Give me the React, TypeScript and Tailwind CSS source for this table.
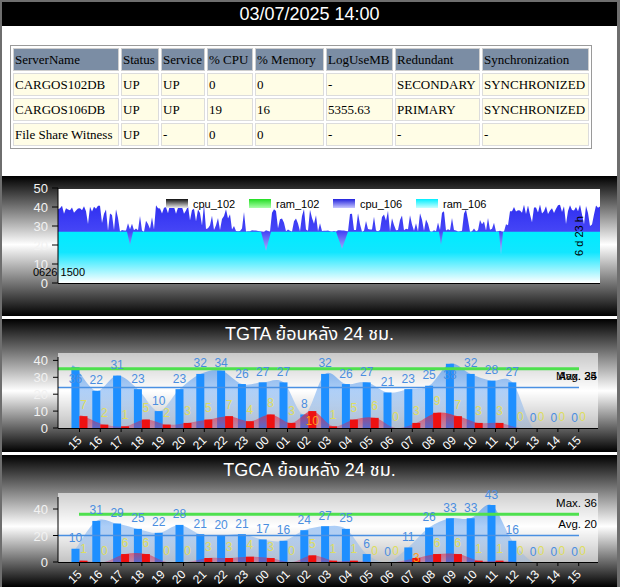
import React from 'react'

type Pt = [number, number]

const hours = ['15', '16', '17', '18', '19', '20', '21', '22', '23', '00', '01', '02', '03', '04', '05', '06', '07', '08', '09', '10', '11', '12', '13', '14', '15']
const cx = (i: number) => 79.5 + 20.8 * i

function rng(seed: number) {
  let a = seed
  return () => {
    a |= 0
    a = (a + 0x6d2b79f5) | 0
    let t = Math.imul(a ^ (a >>> 15), 1 | a)
    t = (t + Math.imul(t ^ (t >>> 7), 61 | t)) ^ t
    return ((t ^ (t >>> 14)) >>> 0) / 4294967296
  }
}

function spline(pts: Pt[]) {
  let d = `M${pts[0][0]},${pts[0][1]}`
  for (let i = 0; i < pts.length - 1; i++) {
    const p0 = pts[i - 1] ?? pts[i]
    const p1 = pts[i]
    const p2 = pts[i + 1]
    const p3 = pts[i + 2] ?? p2
    const t = 1 / 6
    d += ` C${p1[0] + (p2[0] - p0[0]) * t},${p1[1] + (p2[1] - p0[1]) * t} ${p2[0] - (p3[0] - p1[0]) * t},${p2[1] - (p3[1] - p1[1]) * t} ${p2[0]},${p2[1]}`
  }
  return d
}

const headers = ['ServerName', 'Status', 'Service', '% CPU', '% Memory', 'LogUseMB', 'Redundant', 'Synchronization']
const colW = ['w-[106px]', 'w-[38px]', 'w-[44px]', 'w-[46px]', 'w-[69px]', 'w-[67px]', 'w-[85px]', 'w-[107px]']
const rows = [
  ['CARGOS102DB', 'UP', 'UP', '0', '0', '-', 'SECONDARY', 'SYNCHRONIZED'],
  ['CARGOS106DB', 'UP', 'UP', '19', '16', '5355.63', 'PRIMARY', 'SYNCHRONIZED'],
  ['File Share Witness', 'UP', '-', '0', '0', '-', '-', '-'],
]

function StatusTable() {
  return (
    <table className="table-fixed w-[582px] border-separate border-spacing-[2px] border border-[#9a9a9a] bg-white font-['Liberation_Serif',serif] text-[13px] text-black">
      <thead>
        <tr>
          {headers.map((h, i) => (
            <th key={h} className={`${colW[i]} h-[23px] px-[1px] py-0 border border-[#cfcfcf] bg-[#7b8da4] text-left font-normal whitespace-nowrap`}>
              {h}
            </th>
          ))}
        </tr>
      </thead>
      <tbody>
        {rows.map(r => (
          <tr key={r[0]}>
            {r.map((v, i) => (
              <td key={i} className="h-[23px] px-[1px] py-0 border border-[#dcdcdc] bg-[#fffde6] whitespace-nowrap">
                {v}
              </td>
            ))}
          </tr>
        ))}
      </tbody>
    </table>
  )
}

// cpu / ram trend over the last week
const zones: [number, number, 'd' | 'm' | 'l'][] = [
  [58, 108, 'd'], [108, 155, 'm'], [155, 205, 'd'], [205, 245, 'm'], [245, 272, 'l'],
  [272, 322, 'm'], [322, 350, 'l'], [350, 425, 'm'], [425, 440, 'l'], [440, 495, 'm'],
  [495, 505, 'l'], [505, 601, 'd'],
]
const dips: [number, number, number][] = [[130, 3, 7], [266, 5, 10], [342, 6, 9], [441, 2, 7], [501, 2, 12]]
const uy = (v: number) => 283 - v * 1.9

function usageData() {
  const rnd = rng(11)
  const cpu: Pt[] = []
  for (let x = 58; x <= 600; x += 2) {
    const z = zones.find(s => x >= s[0] && x < s[1])?.[2] ?? 'd'
    const r = rnd()
    const r2 = rnd()
    let v: number
    if (z === 'd') v = r2 < 0.1 ? 30 + r * 4 : 36 + r * 5.5
    else if (z === 'm') v = r2 < 0.5 ? 30 + r * 9 : 27 + r * 2
    else v = r2 < 0.08 ? 31 + r * 5 : 27 + r * 0.8
    cpu.push([x, uy(v)])
  }
  const ram: Pt[] = []
  for (let x = 58; x <= 600; x += 1) {
    let v = 27
    dips.forEach(([c, w, d]) => {
      const dx = Math.abs(x - c)
      if (dx < w) v = Math.min(v, 27 - d * (1 - dx / w))
    })
    ram.push([x, uy(v)])
  }
  return { cpu, ram }
}

function UsageChart() {
  const { cpu, ram } = usageData()
  const area = (pts: Pt[]) => `M58,283 ${pts.map(p => `L${p[0]},${p[1]}`).join(' ')} L600,283 Z`
  const legend = [
    { x: 166, label: 'cpu_102', fill: 'url(#lg102c)' },
    { x: 249, label: 'ram_102', fill: 'url(#lg102r)' },
    { x: 333, label: 'cpu_106', fill: 'url(#lg106c)' },
    { x: 416, label: 'ram_106', fill: 'url(#lg106r)' },
  ]
  return (
    <div className="h-[140px] bg-[linear-gradient(180deg,#000_0%,#fff_49%,#000_100%)]">
      <svg width="615" height="140" className="block font-['Liberation_Sans',Arial,sans-serif]">
        <defs>
          <linearGradient id="cpuFill" gradientUnits="userSpaceOnUse" x1="0" y1="190" x2="0" y2="283">
            <stop offset="0" stopColor="#2323ee" />
            <stop offset="0.45" stopColor="#4646f6" />
            <stop offset="0.7" stopColor="#c4c8ff" />
            <stop offset="1" stopColor="#ffffff" />
          </linearGradient>
          <linearGradient id="ramFill" gradientUnits="userSpaceOnUse" x1="0" y1="232" x2="0" y2="283">
            <stop offset="0" stopColor="#00ecff" />
            <stop offset="0.4" stopColor="#12e6ff" />
            <stop offset="1" stopColor="#ffffff" />
          </linearGradient>
          <linearGradient id="lg102c" x1="0" y1="0" x2="0" y2="1">
            <stop offset="0" stopColor="#111" />
            <stop offset="1" stopColor="#eee" />
          </linearGradient>
          <linearGradient id="lg102r" x1="0" y1="0" x2="0" y2="1">
            <stop offset="0" stopColor="#22dd22" />
            <stop offset="1" stopColor="#aaffaa" />
          </linearGradient>
          <linearGradient id="lg106c" x1="0" y1="0" x2="0" y2="1">
            <stop offset="0" stopColor="#2222dd" />
            <stop offset="1" stopColor="#c8c8ff" />
          </linearGradient>
          <linearGradient id="lg106r" x1="0" y1="0" x2="0" y2="1">
            <stop offset="0" stopColor="#00eeff" />
            <stop offset="1" stopColor="#c8ffff" />
          </linearGradient>
        </defs>
        <g transform="translate(-2,-176)">
          <rect x="58" y="189" width="542" height="94" fill="#fff" />
          <path d={area(cpu)} fill="url(#cpuFill)" />
          <path d={area(ram)} fill="url(#ramFill)" />
          <line x1="58" y1="188" x2="58" y2="283" stroke="#000" />
          <line x1="58" y1="283.5" x2="600" y2="283.5" stroke="#000" />
          {[0, 10, 20, 30, 40, 50].map(v => (
            <g key={v}>
              <line x1="52" x2="58" y1={uy(v)} y2={uy(v)} stroke="#000" />
              <text x="48" y={uy(v) + 5} textAnchor="end" fontSize="13" fill="#f2f2f2">{v}</text>
            </g>
          ))}
          {legend.map(l => (
            <g key={l.label}>
              <rect x={l.x} y="199" width="22" height="9" fill={l.fill} />
              <text x={l.x + 27} y="208" fontSize="11" fill="#000">{l.label}</text>
            </g>
          ))}
          <text x="33" y="276" fontSize="11" fill="#000">0626 1500</text>
          <text transform="translate(583,236) rotate(-90)" textAnchor="middle" fontSize="11" fill="#000">6 d 23 h</text>
        </g>
      </svg>
    </div>
  )
}

interface HourProps {
  id: string
  title: string
  top: number
  height: number
  y0: number
  k: number
  axisTop: number
  ticks: number[]
  blue: number[]
  red: number[]
  max: number
  avg: number
  maxFrom: number
  maxTextY: number
  avgTextY: number
  labelMin: number
  insideRed: number[]
}

function HourChart(p: HourProps) {
  const y = (v: number) => p.y0 - v * p.k
  const svgTop = p.top + 28
  const bluePts: Pt[] = p.blue.map((v, i) => [cx(i) - 4, y(v)])
  const redPts: Pt[] = p.red.map((v, i) => [cx(i) + 4, y(v)])
  const bluePath = `${spline([[cx(0) - 8, y(p.blue[0])], ...bluePts])} L${cx(24) + 8},${p.y0} L${cx(0) - 8},${p.y0} Z`
  const redPath = `${spline([[cx(0), y(p.red[0])], ...redPts])} L${cx(24) + 8},${p.y0} L${cx(0)},${p.y0} Z`
  const blueLabelY = (v: number) => {
    const t = y(v)
    if (t - 11 < p.labelMin - 5) return t + 11
    return Math.max(t - 11, p.labelMin)
  }
  return (
    <div className="h-[var(--h)] flex flex-col bg-[linear-gradient(180deg,#000_0%,#fff_54%,#000_100%)]" style={{ ['--h' as string]: `${p.height}px` }}>
      <div className="h-[28px] shrink-0 pt-[5px] text-center text-white text-[18px] leading-[21px] font-['Liberation_Sans','Noto_Sans_Thai','Tahoma',sans-serif]">
        {p.title}
      </div>
      <svg width="615" height={p.height - 28} className="block font-['Liberation_Sans',Arial,sans-serif]">
        <defs>
          <linearGradient id={`${p.id}b`} gradientUnits="userSpaceOnUse" x1="0" y1={p.axisTop} x2="0" y2={p.y0}>
            <stop offset="0" stopColor="#4d97f0" stopOpacity="0.75" />
            <stop offset="1" stopColor="#7aaef0" stopOpacity="0.25" />
          </linearGradient>
          <linearGradient id={`${p.id}r`} gradientUnits="userSpaceOnUse" x1="0" y1={y(10)} x2="0" y2={p.y0}>
            <stop offset="0" stopColor="#ff1a1a" stopOpacity="0.7" />
            <stop offset="1" stopColor="#cc2266" stopOpacity="0.35" />
          </linearGradient>
          <clipPath id={`${p.id}c`}>
            <rect x="58" y={p.axisTop - 6} width="540" height={p.y0 - p.axisTop + 6} />
          </clipPath>
        </defs>
        <g transform={`translate(-2,${-svgTop})`}>
          <rect x="58" y={p.axisTop - 4} width="540" height={p.y0 - p.axisTop + 4} fill="#fff" fillOpacity="0.6" />
          <g clipPath={`url(#${p.id}c)`}>
            <path d={bluePath} fill={`url(#${p.id}b)`} />
            {p.blue.map((v, i) => v > 0 && (
              <rect key={i} x={cx(i) - 8} y={y(v)} width="8" height={v * p.k} fill="#1e8fff" />
            ))}
            <path d={redPath} fill={`url(#${p.id}r)`} />
            {p.red.map((v, i) => v > 0 && (
              <rect key={i} x={cx(i)} y={y(v)} width="8" height={v * p.k} fill="#ee1111" />
            ))}
          </g>
          <line x1={p.maxFrom} x2="579" y1={y(p.max)} y2={y(p.max)} stroke="#4ee04e" strokeWidth="3" />
          <line x1="58" x2="579" y1={y(p.avg)} y2={y(p.avg)} stroke="#4a90e2" strokeWidth="1.5" />
          <line x1="58" x2="58" y1={p.axisTop} y2={p.y0} stroke="#000" />
          <line x1="58" x2="598" y1={p.y0 + 0.5} y2={p.y0 + 0.5} stroke="#000" />
          {p.ticks.map(v => (
            <g key={v}>
              <line x1="53" x2="58" y1={y(v)} y2={y(v)} stroke="#000" />
              <text x="48" y={y(v) + 5} textAnchor="end" fontSize="13" fill="#f2f2f2">{v}</text>
            </g>
          ))}
          {hours.map((h, i) => (
            <g key={i}>
              <line x1={cx(i)} x2={cx(i)} y1={p.y0} y2={p.y0 + 4} stroke="#000" />
              <text transform={`translate(${cx(i) + 3},${p.y0 + 13}) rotate(-45)`} textAnchor="end" fontSize="12" fill="#fff">{h}</text>
            </g>
          ))}
          {p.blue.map((v, i) => (
            <text key={i} x={cx(i) - 4} y={blueLabelY(v) + 4.5} textAnchor="middle" fontSize="12" fill="#4a8ee0">{v}</text>
          ))}
          {p.red.map((v, i) => {
            const inside = p.insideRed.includes(i)
            const cy = inside ? Math.min(y(v) + 9, p.y0 - 5) : y(v) - 12
            return (
              <text key={i} x={cx(i) + 4} y={cy + 4.5} textAnchor="middle" fontSize="12" fill={inside ? '#ff9a1a' : '#dede5e'}>{v}</text>
            )
          })}
          <text x="597" y={p.maxTextY} textAnchor="end" fontSize="11.5" fill="#000">Max. {p.max}</text>
          <text x="597" y={p.avgTextY} textAnchor="end" fontSize="11.5" fill="#000">Avg. {p.avg}</text>
        </g>
      </svg>
    </div>
  )
}

export default function App() {
  return (
    <div className="w-[620px] h-[587px] overflow-hidden bg-white border-l-2 border-t-2 border-r-[3px] border-[#6e6e6e] font-['Liberation_Sans',Arial,sans-serif]">
      <div className="h-[24px] bg-black text-white text-[18px] leading-[24px] text-center">03/07/2025 14:00</div>
      <div className="h-[150px] pt-[19px] pl-[8px]">
        <StatusTable />
      </div>
      <UsageChart />
      <div className="h-[3px] bg-white" />
      <HourChart
        id="tgta"
        title="TGTA ย้อนหลัง 24 ชม."
        top={319}
        height={133}
        y0={428}
        k={1.69}
        axisTop={357}
        ticks={[0, 10, 20, 30, 40]}
        blue={[36, 22, 31, 23, 10, 23, 32, 34, 26, 27, 27, 8, 32, 26, 27, 21, 23, 25, 38, 32, 28, 27, 0, 0, 0]}
        red={[7, 2, 1, 5, 2, 3, 5, 7, 4, 8, 3, 10, 1, 5, 6, 0, 3, 9, 7, 3, 3, 0, 0, 0, 0]}
        max={35}
        avg={24}
        maxFrom={58}
        maxTextY={380}
        avgTextY={380}
        labelMin={362}
        insideRed={[11]}
      />
      <div className="h-[3px] bg-white" />
      <HourChart
        id="tgca"
        title="TGCA ย้อนหลัง 24 ชม."
        top={455}
        height={132}
        y0={562}
        k={1.325}
        axisTop={497}
        ticks={[0, 20, 40]}
        blue={[10, 31, 29, 25, 22, 28, 21, 20, 21, 17, 16, 24, 27, 25, 6, 0, 11, 26, 33, 33, 43, 16, 0, 0, 0]}
        red={[1, 0, 6, 6, 0, 0, 3, 3, 4, 3, 0, 5, 1, 1, 0, 0, 3, 6, 6, 1, 1, 0, 0, 0, 0]}
        max={36}
        avg={20}
        maxFrom={79}
        maxTextY={507}
        avgTextY={528}
        labelMin={480}
        insideRed={[16]}
      />
    </div>
  )
}
